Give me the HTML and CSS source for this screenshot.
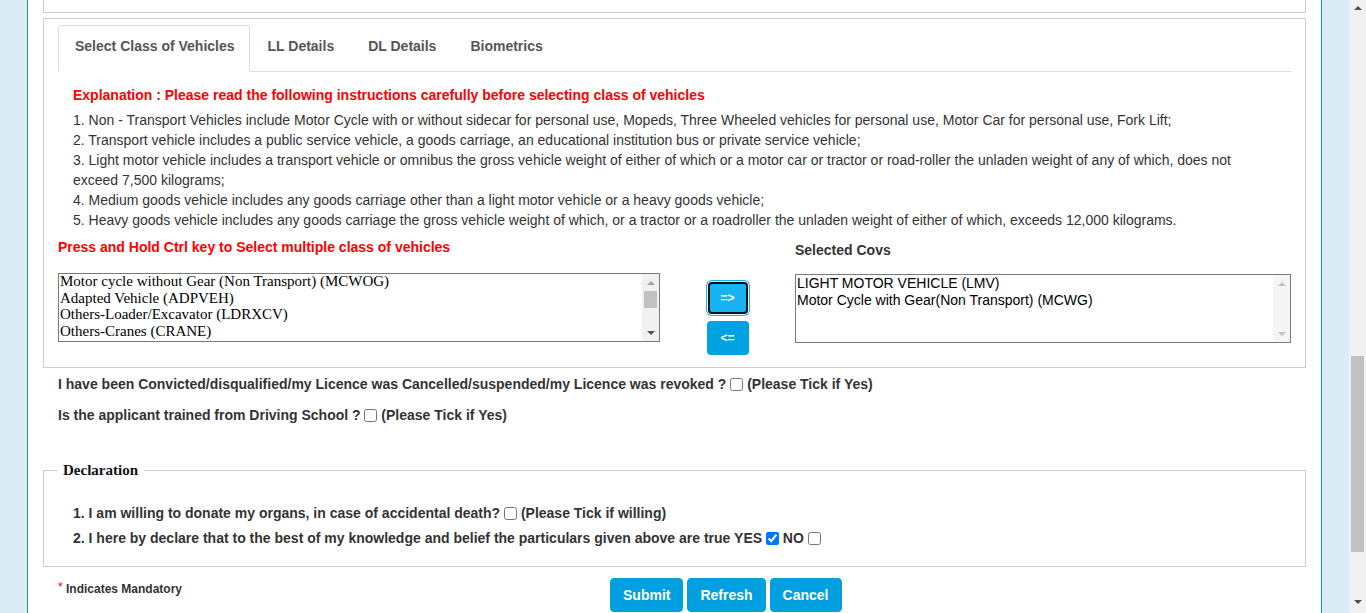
FILE: index.html
```html
<!DOCTYPE html>
<html>
<head>
<meta charset="utf-8">
<link rel="stylesheet" href="styles.css">
</head>
<body>
<div class="side side-left"></div>
<div class="main">
  <div class="prev-box"></div>
  <div class="panel">
    <ul class="tabs">
      <li class="tab active">Select Class of Vehicles</li>
      <li class="tab">LL Details</li>
      <li class="tab">DL Details</li>
      <li class="tab">Biometrics</li>
    </ul>
    <div class="explain">
      <div class="explain-title">Explanation : Please read the following instructions carefully before selecting class of vehicles</div>
      <div class="explain-list">
        <div>1. Non - Transport Vehicles include Motor Cycle with or without sidecar for personal use, Mopeds, Three Wheeled vehicles for personal use, Motor Car for personal use, Fork Lift;</div>
        <div>2. Transport vehicle includes a public service vehicle, a goods carriage, an educational institution bus or private service vehicle;</div>
        <div>3. Light motor vehicle includes a transport vehicle or omnibus the gross vehicle weight of either of which or a motor car or tractor or road-roller the unladen weight of any of which, does not exceed 7,500 kilograms;</div>
        <div>4. Medium goods vehicle includes any goods carriage other than a light motor vehicle or a heavy goods vehicle;</div>
        <div>5. Heavy goods vehicle includes any goods carriage the gross vehicle weight of which, or a tractor or a roadroller the unladen weight of either of which, exceeds 12,000 kilograms.</div>
      </div>
    </div>
    <div class="cov-row">
      <div class="cov-left">
        <div class="red-label">Press and Hold Ctrl key to Select multiple class of vehicles</div>
        <div class="listbox listbox-left">
          <div class="lb-items serif">
            <div>Motor cycle without Gear (Non Transport) (MCWOG)</div>
            <div>Adapted Vehicle (ADPVEH)</div>
            <div>Others-Loader/Excavator (LDRXCV)</div>
            <div>Others-Cranes (CRANE)</div>
          </div>
          <div class="lb-scroll">
            <div class="lb-btn"><span class="tri-up"></span></div>
            <div class="lb-track"><div class="lb-thumb"></div></div>
            <div class="lb-btn"><span class="tri-down"></span></div>
          </div>
        </div>
      </div>
      <div class="cov-mid">
        <button class="arrow-btn focused">=&gt;</button>
        <button class="arrow-btn">&lt;=</button>
      </div>
      <div class="cov-right">
        <div class="dark-label">Selected Covs</div>
        <div class="listbox listbox-right">
          <div class="lb-items sans">
            <div>LIGHT MOTOR VEHICLE (LMV)</div>
            <div>Motor Cycle with Gear(Non Transport) (MCWG)</div>
          </div>
          <div class="lb-scroll disabled">
            <div class="lb-btn"><span class="tri-up"></span></div>
            <div class="lb-track"></div>
            <div class="lb-btn"><span class="tri-down"></span></div>
          </div>
        </div>
      </div>
    </div>
  </div>

  <div class="q-row">I have been Convicted/disqualified/my Licence was Cancelled/suspended/my Licence was revoked ? <input type="checkbox" class="cb"> (Please Tick if Yes)</div>
  <div class="q-row q-second">Is the applicant trained from Driving School ? <input type="checkbox" class="cb"> (Please Tick if Yes)</div>

  <fieldset class="decl">
    <legend>Declaration</legend>
    <div class="decl-item first">1. I am willing to donate my organs, in case of accidental death? <input type="checkbox" class="cb"> (Please Tick if willing)</div>
    <div class="decl-item">2. I here by declare that to the best of my knowledge and belief the particulars given above are true YES <input type="checkbox" class="cb" checked> NO <input type="checkbox" class="cb"></div>
  </fieldset>

  <div class="footer-row">
    <div class="mandatory"><span class="star">*</span> Indicates Mandatory</div>
    <div class="actions">
      <button class="btn">Submit</button>
      <button class="btn">Refresh</button>
      <button class="btn">Cancel</button>
    </div>
  </div>
</div>
<div class="side side-right"></div>
<div class="page-scroll">
  <div class="ps-arrow ps-up"></div>
  <div class="ps-thumb"></div>
  <div class="ps-arrow ps-down"></div>
</div>
</body>
</html>
```

FILE: styles.css
```css
html, body {
  margin: 0;
  padding: 0;
}
body {
  display: flex;
  height: 613px;
  overflow: hidden;
  font-family: "Liberation Sans", Arial, sans-serif;
  color: #333;
  background: #fff;
}
.side {
  width: 27px;
  background: #daecf6;
  flex: none;
}
.side-left {
  border-right: 1px solid #1a8dd0;
}
.side-right {
  border-left: 1px solid #1a8dd0;
}
.main {
  width: 1293px;
  flex: none;
  box-sizing: border-box;
  padding: 0 15px;
  background: #fff;
}
.prev-box {
  height: 13px;
  box-sizing: border-box;
  border: 1px solid #ccc;
  border-top: none;
}
.panel {
  margin-top: 5px;
  border: 1px solid #ccc;
  padding: 6px 14px 12px;
}
.tabs {
  list-style: none;
  margin: 0;
  padding: 0;
  display: flex;
  border-bottom: 1px solid #ddd;
}
.tab {
  font-size: 14px;
  font-weight: bold;
  line-height: 20px;
  color: #555;
  padding: 10px 15px 15px;
  margin-right: 2px;
  margin-bottom: -1px;
  border: 1px solid transparent;
  border-radius: 4px 4px 0 0;
}
.tab.active {
  border-color: #ddd;
  border-bottom-color: #fff;
  background: #fff;
  padding-left: 16px;
  padding-right: 14px;
}
.explain {
  padding: 0 15px;
  margin-top: 13px;
}
.explain-title {
  color: #f00;
  font-weight: bold;
  font-size: 14px;
  line-height: 20px;
}
.explain-list {
  margin-top: 5px;
  font-size: 14px;
  line-height: 20px;
  color: #333;
}
.cov-row {
  display: flex;
  margin-top: 7px;
}
.cov-left {
  width: 602px;
  display: flex;
  flex-direction: column;
}
.cov-mid {
  width: 135px;
  display: flex;
  flex-direction: column;
  align-items: center;
  padding-top: 44px;
  gap: 7px;
}
.cov-right {
  width: 496px;
  display: flex;
  flex-direction: column;
  padding-top: 3px;
}
.red-label {
  color: #f00;
  font-weight: bold;
  font-size: 14px;
  line-height: 20px;
}
.dark-label {
  color: #333;
  font-weight: bold;
  font-size: 14px;
  line-height: 20px;
}
.listbox {
  display: flex;
  height: 69px;
  box-sizing: border-box;
  border: 1px solid #7a7a7a;
  background: #fff;
  color: #000;
}
.listbox-left {
  margin-top: 16px;
}
.listbox-right {
  margin-top: 14px;
}
.lb-items {
  flex: 1;
  overflow: hidden;
  padding-left: 1px;
  white-space: nowrap;
}
.lb-items.serif {
  font-family: "Liberation Serif", "Times New Roman", serif;
  font-size: 15px;
  line-height: 16.5px;
  margin-top: -1px;
}
.lb-items.sans {
  font-family: "Liberation Sans", Arial, sans-serif;
  font-size: 14px;
  line-height: 17px;
}
.lb-scroll {
  width: 17px;
  background: #f1f1f1;
  display: flex;
  flex-direction: column;
}
.lb-btn {
  height: 17px;
  display: flex;
  align-items: center;
  justify-content: center;
}
.lb-track {
  flex: 1;
  display: flex;
  justify-content: center;
}
.lb-thumb {
  width: 13px;
  height: 17px;
  background: #c1c1c1;
}
.tri-up, .tri-down {
  width: 0;
  height: 0;
  border-left: 4px solid transparent;
  border-right: 4px solid transparent;
}
.tri-up {
  border-bottom: 4px solid #a3a3a3;
}
.tri-down {
  border-top: 4px solid #505050;
}
.lb-scroll.disabled {
  background: #f5f5f5;
}
.lb-scroll.disabled .tri-up {
  border-bottom-color: #c3c3c3;
}
.lb-scroll.disabled .tri-down {
  border-top-color: #c3c3c3;
}
.arrow-btn {
  width: 42px;
  height: 34px;
  border: none;
  border-radius: 4px;
  background: #00a2e1;
  color: #fff;
  font-family: "Liberation Sans", Arial, sans-serif;
  font-weight: bold;
  font-size: 12px;
  padding: 0;
}
.arrow-btn.focused {
  width: 40px;
  height: 32px;
  background: #18b3f3;
  border: 2px solid #111;
  box-shadow: 0 0 0 1px #e8f7fe, 0 0 0 2px #18b3f3;
  margin-top: 1px;
}
.q-row {
  margin: 6px 0 0 15px;
  font-size: 14px;
  font-weight: bold;
  line-height: 20px;
  color: #333;
}
.q-second {
  margin-top: 11px;
}
.cb {
  width: 13px;
  height: 13px;
  margin: 0;
  vertical-align: -2px;
}
.decl {
  margin: 36px 0 0;
  border: 1px solid #ccc;
  padding: 0 13px 18px;
}
.decl legend {
  font-family: "Liberation Serif", "Times New Roman", serif;
  font-weight: bold;
  font-size: 15px;
  line-height: 18px;
  color: #111;
  padding: 0 6px;
}
.decl-item {
  margin-left: 16px;
  font-size: 14px;
  font-weight: bold;
  line-height: 20px;
  color: #333;
  margin-top: 5px;
}
.decl-item.first {
  margin-top: 24px;
}
.footer-row {
  display: flex;
  margin-top: 11px;
  padding-left: 15px;
}
.mandatory {
  width: 552px;
  font-size: 12px;
  font-weight: bold;
  line-height: 20px;
  padding-top: 1px;
  color: #333;
}
.star {
  color: #f00;
  font-weight: normal;
  position: relative;
  top: -2px;
}
.actions {
  display: flex;
  gap: 4px;
}
.btn {
  height: 34px;
  padding: 0 12px;
  border: 1px solid #009fe0;
  border-radius: 4px;
  background: #009fe0;
  color: #fff;
  font-family: "Liberation Sans", Arial, sans-serif;
  font-weight: bold;
  font-size: 14px;
}
.page-scroll {
  width: 17px;
  flex: none;
  background: #f1f1f1;
  display: flex;
  flex-direction: column;
  align-items: center;
}
.ps-arrow {
  width: 0;
  height: 0;
  border-left: 4px solid transparent;
  border-right: 4px solid transparent;
}
.ps-up {
  margin-top: 6px;
  border-bottom: 4px solid #505050;
}
.ps-down {
  margin-top: 48px;
  border-top: 4px solid #505050;
}
.ps-thumb {
  width: 13px;
  height: 196px;
  margin-top: 346px;
  background: #c1c1c1;
}
```
